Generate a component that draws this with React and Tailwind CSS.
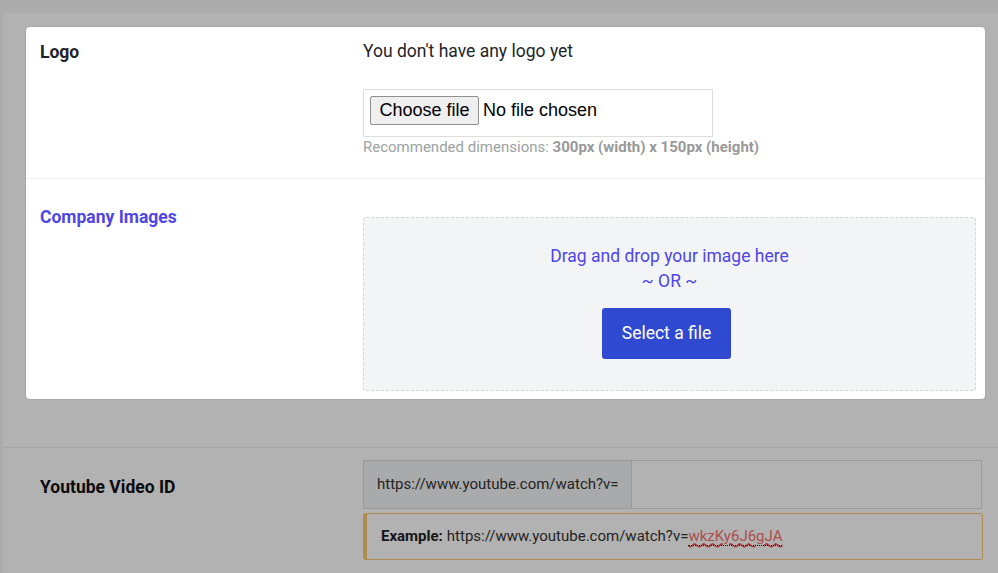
import React from "react";

const font = { fontFamily: "Roboto, 'Noto Sans', sans-serif" };

const LogoRow = () => (
  <div className="grid grid-cols-[337px_1fr] border-b border-[#f1f1f1] pb-[21px]">
    <div className="pl-[14px] pt-[13px]">
      <h3 className="text-[17.5px] leading-6 font-bold text-[#1f2328]">Logo</h3>
    </div>
    <div className="pt-[12px]">
      <p className="text-[17.5px] leading-6 text-[#212529]">You don't have any logo yet</p>
      {/* fake file input */}
      <div className="mt-[26px] w-[350px] h-[48px] border border-[#dedede] px-[6px] pt-[6px]">
        <div className="flex items-center gap-[4px] font-['Liberation_Sans',Arial,sans-serif] text-[18px] text-black">
          <span className="h-[29px] w-[109px] flex items-center justify-center border border-[#8f8f8f] rounded-[2px] bg-[#efefef]">
            Choose file
          </span>
          <span>No file chosen</span>
        </div>
      </div>
      <p className="text-[15px] leading-5 text-[#9ca3a3]">
        Recommended dimensions: <span className="font-bold text-[#999]">300px (width) x 150px (height)</span>
      </p>
    </div>
  </div>
);

const ImagesRow = () => (
  <div className="grid grid-cols-[337px_1fr] pb-[8px]">
    <div className="pl-[14px] pt-[26px]">
      <h3 className="text-[17.5px] leading-6 font-bold text-[#4f46e5]">Company Images</h3>
    </div>
    <div className="pt-[38px] pr-[9px]">
      <div className="h-[174px] rounded-[3px] border border-dashed border-[#d3d6da] bg-[#f3f4f6] flex flex-col items-center pt-[26px]">
        <p className="text-[17.5px] leading-[25px] text-[#4f46e5]">Drag and drop your image here</p>
        <p className="text-[17.5px] leading-[25px] text-[#4f46e5]">~ OR ~</p>
        <button className="mt-[14px] mr-[6px] h-[51px] w-[129px] rounded-[3px] bg-[#2f49d1] text-[17.5px] text-white">
          Select a file
        </button>
      </div>
    </div>
  </div>
);

const YoutubeRow = () => (
  <div className="border-t border-[#ececec] mt-[48px] -mx-[23px] pl-[23px] pr-[15px]">
    <div className="grid grid-cols-[337px_1fr] pt-[12px]">
      <div className="pl-[14px] pt-[15px]">
        <h3 className="text-[17.5px] leading-6 font-bold text-[#111]">Youtube Video ID</h3>
      </div>
      <div>
        <div className="flex h-[49px] mr-[1px] border border-[#dcdcdc]">
          <span className="w-[268px] flex items-center pl-[13px] bg-[#f3f4f5] border-r border-[#dcdcdc] text-[15px] text-[#333]">
            https://www.youtube.com/watch?v=
          </span>
          <span className="flex-1 bg-white" />
        </div>
        <div className="mt-[4px] h-[47px] flex items-center pl-[14px] rounded-[3px] border border-[#fbc674] border-l-4 text-[15px] text-[#333]">
          <span className="font-bold text-[#222]">Example:</span>
          <span className="ml-[4px]">https://www.youtube.com/watch?v=</span>
          <span className="text-[#f87171] underline decoration-wavy decoration-[#f04040] border-b border-dotted border-black leading-[18px]">
            wkzKy6J6gJA
          </span>
        </div>
      </div>
    </div>
  </div>
);

export default function App() {
  return (
    <div className="w-[998px] h-[573px] overflow-hidden bg-[#f7f7f7] pt-[13px] pl-[3px]" style={font}>
      <div className="bg-white h-[600px] px-[23px] pt-[14px]">
        {/* highlighted block */}
        <div className="relative z-10 w-[959px] rounded-[4px] bg-white shadow-[0_0_0_1px_rgba(0,0,0,0.06),0_0_0_9999px_rgba(0,0,0,0.3)]">
          <LogoRow />
          <ImagesRow />
        </div>
        <YoutubeRow />
      </div>
    </div>
  );
}
